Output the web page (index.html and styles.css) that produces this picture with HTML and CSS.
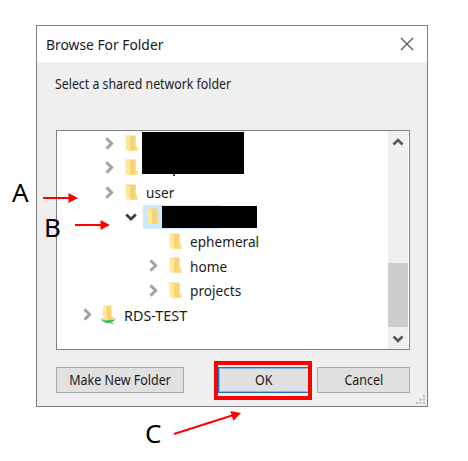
FILE: index.html
```html
<!DOCTYPE html>
<html lang="en">
<head>
<meta charset="utf-8">
<title>Browse For Folder</title>
<link rel="stylesheet" href="styles.css">
</head>
<body>
<svg class="defs" width="0" height="0">
  <symbol id="folder" viewBox="0 0 13 17">
    <path d="M4 .5H10.7V11.5H12.3V15.8H4z" fill="#f7d473"/>
    <path d="M10.2 11.5h2.1v4.3h-2.1z" fill="#fbdf8d"/>
    <path d="M.5.8L5 2.2V16.6L.5 15z" fill="#ffe7a0"/>
    <path d="M.5.5H4.5L5 2.2.5.9z" fill="#f9dc89"/>
  </symbol>
  <symbol id="right" viewBox="0 0 8 12"><path d="M1.2 1.3L6 6 1.2 10.7" fill="none" stroke="#a3a3a3" stroke-width="2.7"/></symbol>
  <symbol id="down" viewBox="0 0 12 8"><path d="M1.2 1.4L6 6 10.8 1.4" fill="none" stroke="#404040" stroke-width="2.8"/></symbol>
</svg>
<main class="dialog">
  <header class="titlebar">
    <span class="title">Browse For Folder</span>
    <svg class="close" width="14" height="14"><path d="M1 1L13 13M13 1L1 13" stroke="#555" stroke-width="1.2"/></svg>
  </header>
  <p class="prompt">Select a shared network folder</p>
  <section class="tree">
    <div class="rows">
      <div class="row l1"><svg class="chev"><use href="#right"/></svg><svg class="folder"><use href="#folder"/></svg></div>
      <div class="row l1"><svg class="chev"><use href="#right"/></svg><svg class="folder"><use href="#folder"/></svg></div>
      <div class="row l1"><svg class="chev"><use href="#right"/></svg><svg class="folder"><use href="#folder"/></svg><span class="name user">user</span></div>
      <div class="row l2"><svg class="chev open"><use href="#down"/></svg><div class="selected"><svg class="folder"><use href="#folder"/></svg></div></div>
      <div class="row l3"><span class="chev"></span><svg class="folder"><use href="#folder"/></svg><span class="name ephemeral">ephemeral</span></div>
      <div class="row l3"><svg class="chev"><use href="#right"/></svg><svg class="folder"><use href="#folder"/></svg><span class="name home">home</span></div>
      <div class="row l3"><svg class="chev"><use href="#right"/></svg><svg class="folder"><use href="#folder"/></svg><span class="name projects">projects</span></div>
      <div class="row l0"><svg class="chev"><use href="#right"/></svg><svg class="share" viewBox="0 0 16 20"><path d="M0 14l5-1.500 11 1v1.500l-5 2z" fill="#b4e3bd"/><path d="M6 .5H11.500V11.500H13V14.500H6z" fill="#f7d473"/><path d="M3 .5L6.500 1.800V15L3 13.500z" fill="#ffe7a0"/><path d="M1 14.500l5 1 6-.8 2.500.8-3 2-4 .8-3.500-1.300z" fill="#35bd50"/><path d="M9 17.500l5 .5v1.200l-4-.7z" fill="#8fbf99"/></svg><span class="name rds">RDS-TEST</span></div>
      <i class="stem"></i><i class="mask one"></i><i class="mask two"></i>
    </div>
    <div class="scrollbar">
      <svg class="arrow" viewBox="0 0 12 8"><path d="M1.5 6.5L6 2 10.5 6.5" fill="none" stroke="#555" stroke-width="2.6"/></svg>
      <div class="thumb"></div>
      <svg class="arrow" viewBox="0 0 12 8"><path d="M1.5 1.5L6 6 10.5 1.5" fill="none" stroke="#555" stroke-width="2.6"/></svg>
    </div>
  </section>
  <footer class="actions">
    <button class="make"><span>Make New Folder</span></button>
    <button class="ok"><span>OK</span></button>
    <button class="cancel"><span>Cancel</span></button>
  </footer>
  <svg class="grip" width="10" height="10" fill="#bdbdbd"><path d="M7 0h2v2H7zM3.500 3.500h2v2h-2zM7 3.500h2v2H7zM0 7h2v2H0zM3.500 7h2v2h-2zM7 7h2v2H7z"/></svg>
</main>
<div class="highlight"></div>
<span class="callout a">A</span><span class="callout b">B</span><span class="callout c">C</span>
<svg class="arrows" width="468" height="461" stroke="#f00" fill="#f00">
  <path d="M43 198H70" stroke-width="2"/><path d="M68.500 193L78 198 68.500 203z" stroke="none"/>
  <path d="M75 225H102" stroke-width="2"/><path d="M100.500 220L110 225 100.500 230z" stroke="none"/>
  <path d="M174 434L232 415.500" stroke-width="2"/><path d="M230.300 411L241 413 233.400 420.700z" stroke="none"/>
</svg>
</body>
</html>
```
FILE: styles.css
```css
* { box-sizing: border-box; }
body { margin: 0; width: 468px; height: 461px; overflow: hidden; background: #fff; color: #1a1a1a; font: 14.5px/20px "Noto Sans", sans-serif; position: relative; padding: 25px 0 0 36px; }
.defs { position: absolute; }
.dialog { width: 392px; height: 382px; border: 1px solid #808080; background: #efefef; position: relative; }
.titlebar { height: 36px; background: #fff; display: flex; justify-content: space-between; align-items: center; padding: 0 13px 0 9px; }
.title { font-size: 15px; transform: scaleX(.922); transform-origin: left; white-space: nowrap; }
.prompt { margin: 12px 0 0 18px; width: max-content; font-size: 14px; transform: scaleX(.88); transform-origin: left; }
.tree { margin: 36px 0 0 19px; width: 354px; height: 220px; border: 1px solid #828282; background: #fff; display: flex; }
.rows { flex: 1; position: relative; }
.row { height: 24.5px; display: flex; align-items: center; }
.l0 { padding-left: 26px; }
.l1 { padding-left: 48px; }
.l2 { padding-left: 68px; }
.l3 { padding-left: 92px; }
.chev { width: 9px; height: 13px; margin-right: 11px; flex: none; }
.chev.open { width: 12px; height: 8px; margin-right: 6px; }
.folder { width: 13px; height: 17px; margin-right: 8px; flex: none; }
.selected { background: #cce8ff; width: 78px; height: 24px; padding: 3px 0 0 4px; }
.share { width: 16px; height: 20px; margin: 0 8px 0 -3px; }
.name { transform-origin: left; transform: scaleX(.94); white-space: nowrap; }
.name.rds { transform: scaleX(.99); }
.mask { position: absolute; background: #000; }
.one { left: 85px; top: 1px; width: 102px; height: 42px; }
.two { left: 105px; top: 75px; width: 95px; height: 22px; }
.stem { position: absolute; left: 116px; top: 43px; width: 2px; height: 2px; background: #2d4668; }
.scrollbar { width: 20px; margin-right: 1px; background: #efefef; display: flex; flex-direction: column; align-items: center; padding: 7px 0 6px; }
.arrow { width: 12px; height: 8px; }
.thumb { width: 100%; height: 64px; background: #cdcdcd; margin: auto 0 8px; }
.actions { display: flex; margin: 17px 0 0 19px; }
button { height: 26px; padding: 0; border: 1px solid #adadad; background: #e1e1e1; font: inherit; font-size: 14px; color: #1a1a1a; }
button span { display: inline-block; white-space: nowrap; transform: scaleX(.89); }
.make { width: 128px; }
.ok { width: 92px; margin-left: 34px; border: 1px solid #1a74c8; box-shadow: inset 0 0 0 1px #8bb9e0; }
.cancel { width: 93px; margin-left: 7px; }
.grip { position: absolute; right: 1px; bottom: 1px; }
.highlight { position: absolute; left: 214px; top: 361px; width: 98px; height: 39px; border: 4px solid #f00; }
.callout { position: absolute; color: #000; font-size: 26px; line-height: 30px; }
.a { left: 12px; top: 177px; }
.b { left: 44px; top: 212px; }
.c { left: 145px; top: 418px; }
.arrows { position: absolute; left: 0; top: 0; }
```
